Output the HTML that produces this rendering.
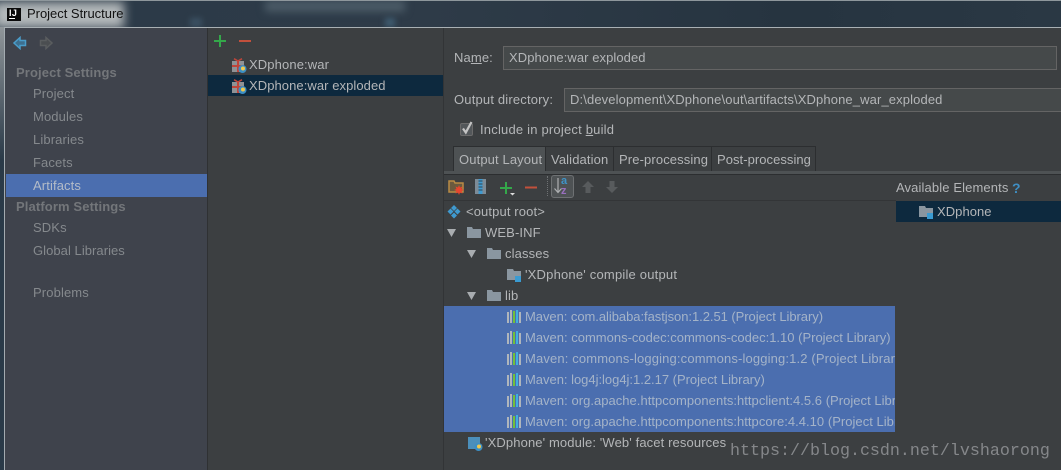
<!DOCTYPE html>
<html><head><meta charset="utf-8"><style>
html,body{margin:0;padding:0}
body{width:1061px;height:470px;overflow:hidden;position:relative;background:#3c3f41;font-family:"Liberation Sans",sans-serif}
div,svg{position:absolute}
.t{white-space:nowrap;font-size:13px;line-height:16px;color:#b4b6b8;letter-spacing:.12px}
.g{color:#85898d}
.b{font-weight:bold;color:#73767a}
.s{color:#a4b3c8}
</style></head><body>
<!-- title bar -->
<div style="left:0;top:0;width:1061px;height:27px;background:linear-gradient(90deg,#2b3a48,#2e3b48 40%,#263440 75%,#2a3844)"></div>
<div style="left:265px;top:0;width:140px;height:12px;background:#4a5a66;filter:blur(4px)"></div>
<div style="left:190px;top:18px;width:12px;height:9px;background:#3b5062;filter:blur(3px)"></div>
<div style="left:385px;top:18px;width:10px;height:9px;background:#3f5c70;filter:blur(3px)"></div>
<div style="left:-6px;top:2px;width:130px;height:26px;background:#b4b9bb;filter:blur(5px)"></div>
<div style="left:0;top:0;width:1061px;height:1px;background:#8e979c"></div>
<div style="left:7px;top:8px;width:14px;height:13px;background:#0b0b0b"></div>
<div class="t" style="left:9px;top:8px;color:#fff;font-size:9px;line-height:10px;font-weight:bold;letter-spacing:.4px">IJ</div>
<div style="left:9px;top:18px;width:6px;height:1px;background:#fff"></div>
<div class="t" style="left:27px;top:6px;color:#111;font-size:13px;letter-spacing:-.02px">Project Structure</div>
<!-- window -->
<div style="left:0;top:27px;width:4px;height:443px;background:linear-gradient(180deg,#90969a,#2a3a48 30%,#2a3a48)"></div>
<div style="left:4px;top:27px;width:1057px;height:1px;background:#a9b0b4"></div>
<div style="left:4px;top:27px;width:1px;height:443px;background:#a3abb0"></div>
<div style="left:5px;top:28px;width:1056px;height:442px;background:#3c3f41"></div>
<div style="left:5px;top:28px;width:202px;height:442px;background:#3f434c"></div>
<div style="left:207px;top:28px;width:1px;height:442px;background:#2f3133"></div>
<div style="left:443px;top:28px;width:1px;height:442px;background:#323436"></div>
<!-- nav arrows -->
<svg style="left:13px;top:36px" width="14" height="14" viewBox="0 0 14 14"><path d="M7 1.500L1 7l6 5.500V9.500h5.500v-5H7z" fill="#3d6f8f" stroke="#4a9cc9" stroke-width="1.500"/></svg>
<svg style="left:39px;top:36px" width="14" height="14" viewBox="0 0 14 14"><path d="M7 1.500L13 7l-6 5.500V9.500H1.500v-5H7z" fill="#4b4e51" stroke="#5a5d5f" stroke-width="1.500"/></svg>
<!-- sidebar -->
<div class="t b" style="left:16px;top:65px">Project Settings</div>
<div class="t g" style="left:33px;top:86px">Project</div>
<div class="t g" style="left:33px;top:109px">Modules</div>
<div class="t g" style="left:33px;top:132px">Libraries</div>
<div class="t g" style="left:33px;top:155px">Facets</div>
<div style="left:6px;top:174px;width:201px;height:23px;background:#4b6eaf"></div>
<div class="t" style="left:33px;top:178px;color:#b4bcc8">Artifacts</div>
<div class="t b" style="left:16px;top:199px">Platform Settings</div>
<div class="t g" style="left:33px;top:220px">SDKs</div>
<div class="t g" style="left:33px;top:243px;letter-spacing:.05px">Global Libraries</div>
<div class="t g" style="left:33px;top:285px">Problems</div>
<!-- middle -->
<svg style="left:214px;top:35px" width="40" height="12" viewBox="0 0 40 12"><path d="M0 6h12M6 0v12" stroke="#34a84a" stroke-width="2"/><path d="M25 6h12" stroke="#c2503c" stroke-width="2"/></svg>
<svg style="left:232px;top:58px" width="15" height="16" viewBox="0 0 15 16"><rect x="0" y="3" width="12" height="11" fill="#8f9295"/><rect x="0" y="7" width="12" height="2" fill="#c0453a"/><rect x="5" y="3" width="2" height="11" fill="#c0453a"/><path d="M2 .7l4 2.300 4-2.300" stroke="#c0453a" fill="none" stroke-width="1.500"/><circle cx="10.500" cy="11" r="4" fill="#3d8fc4"/><circle cx="11" cy="10.500" r="2" fill="#f2c94c"/></svg>
<div class="t" style="left:249px;top:57px">XDphone:war</div>
<div style="left:208px;top:75px;width:235px;height:21px;background:#0d293e"></div>
<svg style="left:232px;top:79px" width="15" height="16" viewBox="0 0 15 16"><rect x="0" y="3" width="12" height="11" fill="#8f9295"/><rect x="0" y="7" width="12" height="2" fill="#c0453a"/><rect x="5" y="3" width="2" height="11" fill="#c0453a"/><path d="M2 .7l4 2.300 4-2.300" stroke="#c0453a" fill="none" stroke-width="1.500"/><circle cx="10.500" cy="11" r="4" fill="#3d8fc4"/><circle cx="11" cy="10.500" r="2" fill="#f2c94c"/></svg>
<div class="t" style="left:249px;top:78px;letter-spacing:.07px">XDphone:war exploded</div>
<!-- form -->
<div class="t" style="left:454px;top:50px">Na<u>m</u>e:</div>
<div style="left:503px;top:46px;width:552px;height:22px;background:#45494a;border:1px solid #646464"></div>
<div class="t" style="left:509px;top:50px;letter-spacing:.07px">XDphone:war exploded</div>
<div class="t" style="left:454px;top:92px;letter-spacing:.18px">Output directory:</div>
<div style="left:564px;top:88px;width:498px;height:22px;background:#45494a;border:1px solid #646464;border-right:0"></div>
<div class="t" style="left:570px;top:92px">D:\development\XDphone\out\artifacts\XDphone_war_exploded</div>
<svg style="left:458px;top:120px" width="16" height="17" viewBox="0 0 16 17"><rect x="2.500" y="3.500" width="12" height="12" rx="1.500" fill="#53575a" stroke="#6b6b6b"/><path d="M5 8.500l2.800 4L13.500 2" fill="none" stroke="#c4c4c4" stroke-width="2.200"/></svg>
<div class="t" style="left:480px;top:122px;letter-spacing:.2px">Include in project <u>b</u>uild</div>
<!-- tabs -->
<div style="left:453px;top:146px;width:363px;height:25px;border:1px solid #2c2e30;border-bottom:0;box-sizing:border-box"></div>
<div style="left:454px;top:147px;width:91px;height:24px;background:#4e5254"></div>
<div style="left:545px;top:147px;width:1px;height:24px;background:#2c2e30"></div>
<div style="left:613px;top:147px;width:1px;height:24px;background:#2c2e30"></div>
<div style="left:711px;top:147px;width:1px;height:24px;background:#2c2e30"></div>
<div class="t" style="left:459px;top:152px">Output Layout</div>
<div class="t" style="left:551px;top:152px">Validation</div>
<div class="t" style="left:619px;top:152px">Pre-processing</div>
<div class="t" style="left:717px;top:152px;letter-spacing:.05px">Post-processing</div>
<div style="left:444px;top:171px;width:617px;height:3px;background:#4e5254"></div>
<div style="left:444px;top:174px;width:617px;height:1px;background:#2c2e30"></div>
<!-- toolbar -->
<svg style="left:448px;top:179px" width="18" height="17" viewBox="0 0 18 17"><path d="M1 2h5l1 2h8v9H1z" fill="#6b5a3e" stroke="#b98b45" stroke-width="1.500"/><path d="M11 6l1 2.500 2.500-1-1 2.500 2.500 1-2.500 1 1 2.500-2.500-1-1 2.500-1-2.500-2.500 1 1-2.500-2.500-1 2.500-1-1-2.500 2.500 1z" fill="#e8452e"/></svg>
<svg style="left:475px;top:179px" width="12" height="16" viewBox="0 0 12 16"><rect x="0" y="0" width="11" height="15" fill="#7d8b96"/><rect x="3.500" y="0" width="4" height="15" fill="#3f9ad0"/><path d="M3.500 2h4M3.500 5h4M3.500 8h4M3.500 11h4" stroke="#2d4656" stroke-width="1"/></svg>
<svg style="left:500px;top:182px" width="40" height="16" viewBox="0 0 40 16"><path d="M0 6h12M6 0v12" stroke="#34a84a" stroke-width="2"/><path d="M10 11h5l-2.500 2.500z" fill="#ddd"/><path d="M25 5.500h12" stroke="#c2503c" stroke-width="2"/></svg>
<div style="left:547px;top:176px;width:0;height:20px;border-left:1px dotted #6e7173"></div>
<div style="left:551px;top:175px;width:23px;height:23px;box-sizing:border-box;background:#4e5254;border:1px solid #6e7173;border-radius:3px"></div>
<svg style="left:553px;top:177px" width="18" height="19" viewBox="0 0 18 19"><path d="M5 1v14M1.500 11.500L5 15.500l3.500-4" fill="none" stroke="#aeb0b2" stroke-width="1.200"/></svg>
<div class="t" style="left:561px;top:176px;font-size:11px;line-height:10px;color:#3f94c8;font-weight:bold">a</div>
<div class="t" style="left:561px;top:186px;font-size:11px;line-height:10px;color:#9a6fbf;font-weight:bold">z</div>
<svg style="left:581px;top:180px" width="14" height="14" viewBox="0 0 14 14"><path d="M7 1L1 7h3.500v6h5V7H13z" fill="#585b5d"/></svg>
<svg style="left:605px;top:180px" width="14" height="14" viewBox="0 0 14 14"><path d="M7 13L1 7h3.500V1h5v6H13z" fill="#585b5d"/></svg>
<div class="t" style="left:896px;top:180px">Available Elements</div>
<div class="t" style="left:1012px;top:180px;color:#3f8fc4;font-weight:bold;font-size:14px">?</div>
<div style="left:444px;top:200px;width:452px;height:1px;background:#333537"></div>
<div style="left:896px;top:201px;width:165px;height:21px;background:#0d293e"></div>
<svg style="left:919px;top:205px" width="15" height="15" viewBox="0 0 15 15"><path d="M0 1h6l1 2h7v9H0z" fill="#8a96a0"/><rect x="8" y="8" width="6" height="6" fill="#3a9bd2"/></svg>
<div class="t" style="left:937px;top:204px;letter-spacing:.05px">XDphone</div>
<!-- tree -->
<svg style="left:447px;top:205px" width="14" height="14" viewBox="0 0 14 14"><path d="M7 0l3 3-3 3-3-3zM3.500 3.500l3 3-3 3-3-3zM10.500 3.500l3 3-3 3-3-3zM7 7.500l3 3-3 3-3-3z" fill="#3f9ad0"/></svg>
<div class="t" style="left:466px;top:204px">&lt;output root&gt;</div>
<svg style="left:447px;top:228px" width="10" height="10"><path d="M0 1h9L4.500 9z" fill="#a9adb0"/></svg>
<svg style="left:467px;top:227px" width="14" height="12" viewBox="0 0 14 12"><path d="M0 0h5l1 2h8v9H0z" fill="#8a96a0"/></svg>
<div class="t" style="left:485px;top:225px">WEB-INF</div>
<svg style="left:467px;top:249px" width="10" height="10"><path d="M0 1h9L4.500 9z" fill="#a9adb0"/></svg>
<svg style="left:487px;top:248px" width="14" height="12" viewBox="0 0 14 12"><path d="M0 0h5l1 2h8v9H0z" fill="#8a96a0"/></svg>
<div class="t" style="left:505px;top:246px">classes</div>
<svg style="left:507px;top:268px" width="15" height="15" viewBox="0 0 15 15"><path d="M0 1h6l1 2h7v9H0z" fill="#8a96a0"/><rect x="8" y="8" width="6" height="6" fill="#3a9bd2"/></svg>
<div class="t" style="left:525px;top:267px;letter-spacing:.2px">'XDphone' compile output</div>
<svg style="left:467px;top:291px" width="10" height="10"><path d="M0 1h9L4.500 9z" fill="#a9adb0"/></svg>
<svg style="left:487px;top:290px" width="14" height="12" viewBox="0 0 14 12"><path d="M0 0h5l1 2h8v9H0z" fill="#8a96a0"/></svg>
<div class="t" style="left:505px;top:288px">lib</div>
<div style="left:444px;top:306px;width:451px;height:126px;background:#4b6eaf"></div>
<div style="left:444px;top:306px;width:451px;height:126px;overflow:hidden">
<svg style="left:63px;top:4px" width="15" height="126" viewBox="0 0 15 126"><rect x="0" y="2" width="2" height="11" fill="#b0b6bc"/><rect x="3" y="0" width="2" height="13" fill="#b0b6bc"/><rect x="6" y="1" width="2" height="12" fill="#72c03a"/><rect x="9" y="0" width="2" height="13" fill="#3fb0e0"/><rect x="12" y="2" width="2" height="11" fill="#b0b6bc"/>
<rect x="0" y="23" width="2" height="11" fill="#b0b6bc"/><rect x="3" y="21" width="2" height="13" fill="#b0b6bc"/><rect x="6" y="22" width="2" height="12" fill="#72c03a"/><rect x="9" y="21" width="2" height="13" fill="#3fb0e0"/><rect x="12" y="23" width="2" height="11" fill="#b0b6bc"/>
<rect x="0" y="44" width="2" height="11" fill="#b0b6bc"/><rect x="3" y="42" width="2" height="13" fill="#b0b6bc"/><rect x="6" y="43" width="2" height="12" fill="#72c03a"/><rect x="9" y="42" width="2" height="13" fill="#3fb0e0"/><rect x="12" y="44" width="2" height="11" fill="#b0b6bc"/>
<rect x="0" y="65" width="2" height="11" fill="#b0b6bc"/><rect x="3" y="63" width="2" height="13" fill="#b0b6bc"/><rect x="6" y="64" width="2" height="12" fill="#72c03a"/><rect x="9" y="63" width="2" height="13" fill="#3fb0e0"/><rect x="12" y="65" width="2" height="11" fill="#b0b6bc"/>
<rect x="0" y="86" width="2" height="11" fill="#b0b6bc"/><rect x="3" y="84" width="2" height="13" fill="#b0b6bc"/><rect x="6" y="85" width="2" height="12" fill="#72c03a"/><rect x="9" y="84" width="2" height="13" fill="#3fb0e0"/><rect x="12" y="86" width="2" height="11" fill="#b0b6bc"/>
<rect x="0" y="107" width="2" height="11" fill="#b0b6bc"/><rect x="3" y="105" width="2" height="13" fill="#b0b6bc"/><rect x="6" y="106" width="2" height="12" fill="#72c03a"/><rect x="9" y="105" width="2" height="13" fill="#3fb0e0"/><rect x="12" y="107" width="2" height="11" fill="#b0b6bc"/></svg>
<div class="t s" style="left:81px;top:3px;letter-spacing:-.05px">Maven: com.alibaba:fastjson:1.2.51 (Project Library)</div>
<div class="t s" style="left:81px;top:24px;letter-spacing:0">Maven: commons-codec:commons-codec:1.10 (Project Library)</div>
<div class="t s" style="left:81px;top:45px;letter-spacing:.14px">Maven: commons-logging:commons-logging:1.2 (Project Library)</div>
<div class="t s" style="left:81px;top:66px;letter-spacing:-.02px">Maven: log4j:log4j:1.2.17 (Project Library)</div>
<div class="t s" style="left:81px;top:87px;letter-spacing:.03px">Maven: org.apache.httpcomponents:httpclient:4.5.6 (Project Library)</div>
<div class="t s" style="left:81px;top:108px;letter-spacing:.03px">Maven: org.apache.httpcomponents:httpcore:4.4.10 (Project Library)</div>
</div>
<svg style="left:468px;top:437px" width="15" height="15" viewBox="0 0 15 15"><rect x="0" y="0" width="12" height="12" fill="#4b8fbb"/><circle cx="10.500" cy="10" r="4" fill="#3d8fc4"/><circle cx="11" cy="9.500" r="2" fill="#f2c94c"/></svg>
<div class="t" style="left:485px;top:435px">'XDphone' module: 'Web' facet resources</div>
<div class="t" style="left:730px;top:442px;font-family:'Liberation Mono',monospace;font-size:16.670px;line-height:20px;color:#85878a;letter-spacing:0">https://blog.csdn.net/lvshaorong</div>
</body></html>
